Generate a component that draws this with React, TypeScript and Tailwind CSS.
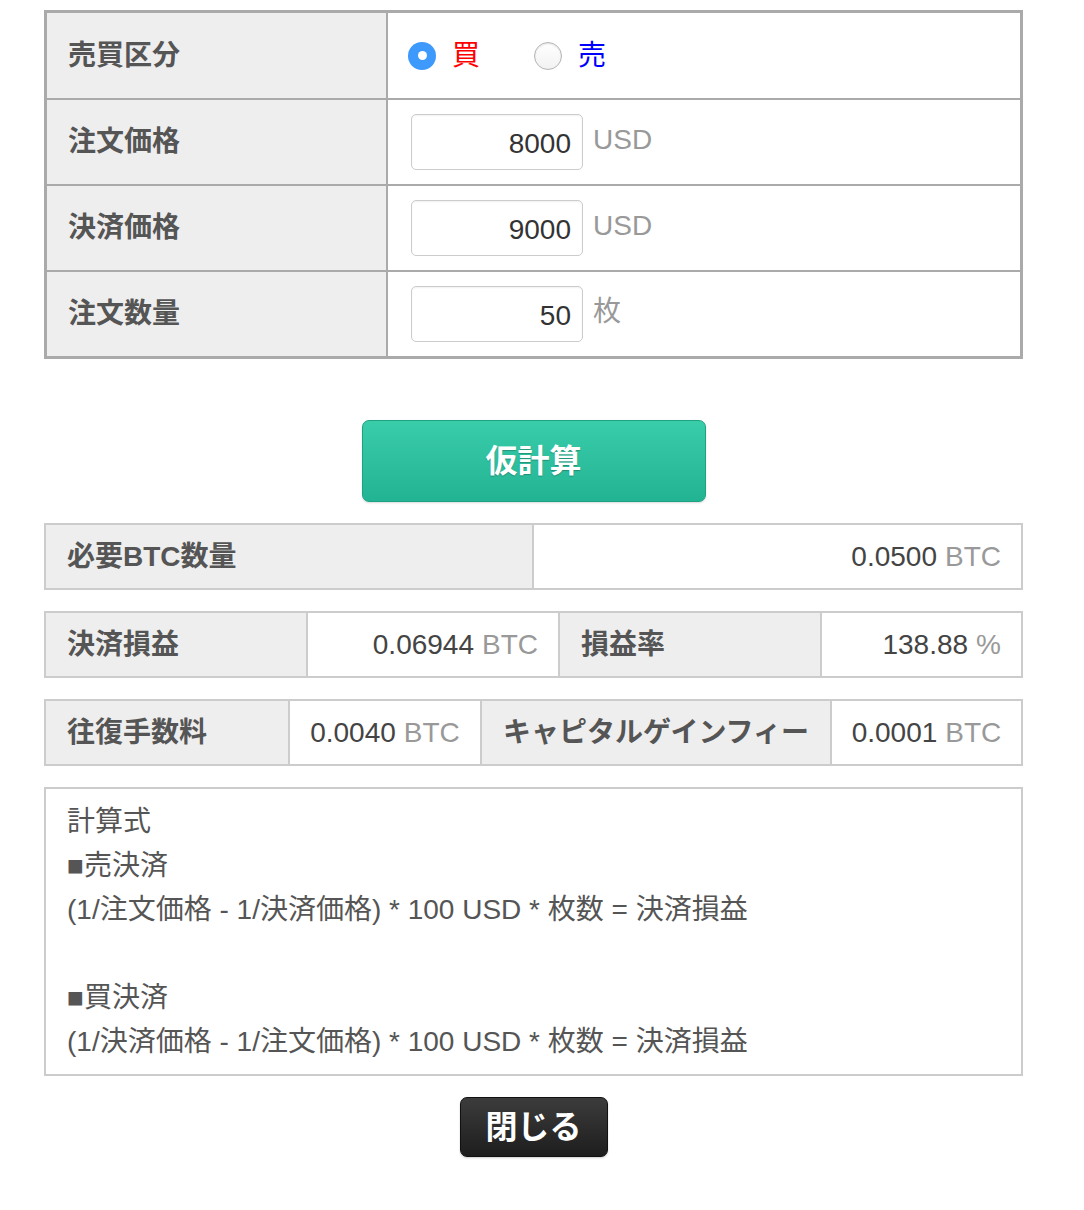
import React from 'react';

const font = { fontFamily: '"Liberation Sans", "Noto Sans CJK JP", sans-serif' };

function Radio({ checked }: { checked: boolean }) {
  if (checked) {
    return (
      <span className="flex h-[28px] w-[28px] shrink-0 items-center justify-center rounded-full bg-[#3d99fb]">
        <span className="h-[9px] w-[9px] rounded-full bg-white" />
      </span>
    );
  }
  return (
    <span className="block h-[28px] w-[28px] shrink-0 rounded-full border border-[#b5b5b5] bg-gradient-to-b from-white to-[#f2f2f2] shadow-[inset_0_1px_2px_rgba(0,0,0,0.12)]" />
  );
}

function FormRow({ label, last, children }: { label: string; last?: boolean; children: React.ReactNode }) {
  return (
    <div className={`flex ${last ? 'h-[84px]' : 'h-[86px] border-b-2 border-[#aaa]'}`}>
      <div className="flex w-[341px] shrink-0 items-center border-r-2 border-[#aaa] bg-[#eee] pl-[21px] text-[28px] font-bold text-[#555]">
        {label}
      </div>
      <div className="flex flex-1 items-center bg-white pl-[23px]">{children}</div>
    </div>
  );
}

function NumInput({ value, unit }: { value: string; unit: string }) {
  return (
    <div className="flex items-center gap-[10px]">
      <input
        readOnly
        value={value}
        className="h-[56px] w-[172px] rounded-[5px] border border-[#ccc] bg-white pt-[3px] pr-[11px] text-right text-[28px] text-[#333] shadow-[inset_0_1px_2px_rgba(0,0,0,0.06)] outline-none"
        style={font}
      />
      <span className="-mt-[4px] text-[28px] text-[#999]">{unit}</span>
    </div>
  );
}

function Label({ text }: { text: string }) {
  return (
    <div className="flex h-full w-full items-center bg-[#eee] px-[21px] text-[28px] font-bold whitespace-nowrap text-[#555]">
      {text}
    </div>
  );
}

function Value({ num, unit, center }: { num: string; unit: string; center?: boolean }) {
  return (
    <div
      className={`flex flex-1 items-center bg-white text-[28px] whitespace-nowrap ${
        center ? 'justify-center' : 'justify-end px-[20px]'
      }`}
    >
      <span className="text-[#444]">{num}</span>
      <span className="ml-[8px] text-[#999]">{unit}</span>
    </div>
  );
}

export default function App() {
  return (
    <div className="min-h-[1210px] bg-white pt-[10px]" style={font}>
      <div className="ml-[44px] w-[979px]">
        <div className="border-[3px] border-[#aaa]">
          <div className="flex h-[87px] border-b-2 border-[#aaa]">
            <div className="flex w-[341px] shrink-0 items-center border-r-2 border-[#aaa] bg-[#eee] pl-[21px] text-[28px] font-bold text-[#555]">
              売買区分
            </div>
            <div className="flex flex-1 items-center bg-white pl-[20px] text-[28px]">
              <Radio checked />
              <span className="ml-[16px] text-[#f00]">買</span>
              <span className="ml-[54px] flex">
                <Radio checked={false} />
              </span>
              <span className="ml-[16px] text-[#00f]">売</span>
            </div>
          </div>
          <FormRow label="注文価格">
            <NumInput value="8000" unit="USD" />
          </FormRow>
          <FormRow label="決済価格">
            <NumInput value="9000" unit="USD" />
          </FormRow>
          <FormRow label="注文数量" last>
            <NumInput value="50" unit="枚" />
          </FormRow>
        </div>

        <div className="mt-[61px] flex justify-center">
          <button className="h-[82px] w-[344px] rounded-[7px] border border-[#1ea283] bg-gradient-to-b from-[#39cdaa] to-[#22b393] text-[32px] font-bold text-white shadow-[0_1px_2px_rgba(0,0,0,0.15)] [text-shadow:0_1px_1px_rgba(0,0,0,0.25)]">
            仮計算
          </button>
        </div>

        <div className="mt-[21px] flex h-[67px] border-2 border-[#ccc]">
          <div className="w-[488px] shrink-0 border-r-2 border-[#ccc]">
            <Label text="必要BTC数量" />
          </div>
          <Value num="0.0500" unit="BTC" />
        </div>

        <div className="mt-[21px] flex h-[67px] border-2 border-[#ccc]">
          <div className="w-[262px] shrink-0 border-r-2 border-[#ccc]">
            <Label text="決済損益" />
          </div>
          <div className="flex w-[252px] shrink-0 border-r-2 border-[#ccc]">
            <Value num="0.06944" unit="BTC" />
          </div>
          <div className="w-[262px] shrink-0 border-r-2 border-[#ccc]">
            <Label text="損益率" />
          </div>
          <Value num="138.88" unit="%" />
        </div>

        <div className="mt-[21px] flex h-[67px] border-2 border-[#ccc]">
          <div className="w-[244px] shrink-0 border-r-2 border-[#ccc]">
            <Label text="往復手数料" />
          </div>
          <div className="flex w-[192px] shrink-0 border-r-2 border-[#ccc]">
            <Value num="0.0040" unit="BTC" center />
          </div>
          <div className="w-[350px] shrink-0 border-r-2 border-[#ccc]">
            <Label text="キャピタルゲインフィー" />
          </div>
          <Value num="0.0001" unit="BTC" center />
        </div>

        <div className="mt-[21px] border-2 border-[#ccc] px-[21px] pt-[11px] pb-[10px] text-[28px] text-[#555]">
          <div className="flex h-[44px] items-center">計算式</div>
          <div className="flex h-[44px] items-center">■売決済</div>
          <div className="flex h-[44px] items-center">(1/注文価格 - 1/決済価格) * 100 USD * 枚数 = 決済損益</div>
          <div className="h-[44px]" />
          <div className="flex h-[44px] items-center">■買決済</div>
          <div className="flex h-[44px] items-center">(1/決済価格 - 1/注文価格) * 100 USD * 枚数 = 決済損益</div>
        </div>

        <div className="mt-[21px] flex justify-center">
          <button className="h-[60px] w-[148px] rounded-[7px] border border-[#111] bg-gradient-to-b from-[#3c3c3c] to-[#1e1e1e] text-[32px] font-bold text-white shadow-[0_1px_2px_rgba(0,0,0,0.2)]">
            閉じる
          </button>
        </div>
      </div>
    </div>
  );
}
